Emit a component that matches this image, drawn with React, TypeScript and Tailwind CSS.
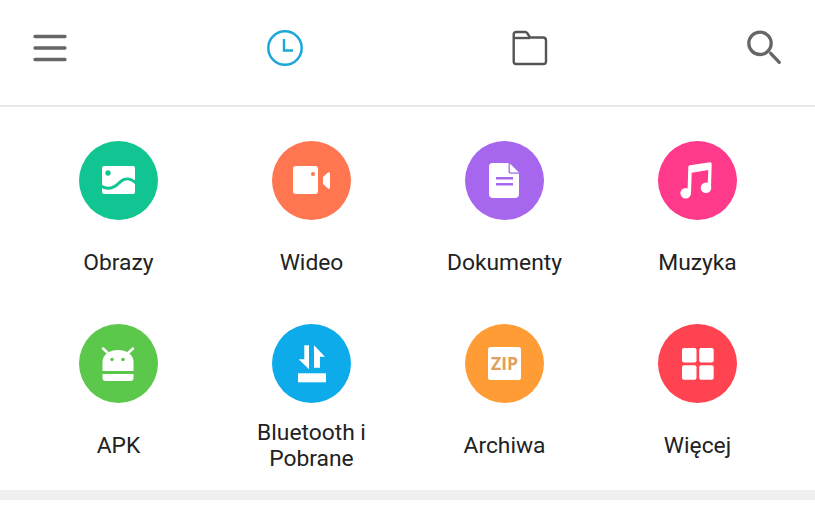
const font = { fontFamily: "Roboto, sans-serif" };

function Circle({ color, children }: { color: string; children: React.ReactNode }) {
  return (
    <div className={`flex h-[79px] w-[79px] items-center justify-center rounded-full ${color}`}>
      {children}
    </div>
  );
}

const Glyph = ({ children }: { children: React.ReactNode }) => (
  <svg viewBox="0 0 79 79" className="h-[79px] w-[79px]">
    {children}
  </svg>
);

const items = [
  {
    label: ["Obrazy"],
    color: "bg-[#10c592]",
    icon: (
      <Glyph>
        <rect x="23" y="25" width="33" height="28" rx="2" fill="#fff" />
        <circle cx="29" cy="32" r="2.700" fill="#10c592" />
        <path d="M22 45 C30 50 36 46 40 42 C45 37 50 36 57 42" fill="none" stroke="#10c592" strokeWidth="3" />
      </Glyph>
    ),
  },
  {
    label: ["Wideo"],
    color: "bg-[#ff7651]",
    icon: (
      <Glyph>
        <rect x="21" y="25" width="25" height="28" rx="3" fill="#fff" />
        <circle cx="41" cy="33" r="2" fill="#ff7651" />
        <path d="M51 36 L56 31.500 Q58 30.500 58 32.500 V46.500 Q58 48.500 56 47.500 L51 43 Z" fill="#fff" />
      </Glyph>
    ),
  },
  {
    label: ["Dokumenty"],
    color: "bg-[#a667ee]",
    icon: (
      <Glyph>
        <path d="M27.500 22 H43.500 V30.500 Q43.500 32.800 45.800 32.800 H54 V53 Q54 57 50 57 H28 Q24 57 24 53 V25.500 Q24 22 27.500 22 Z" fill="#fff" />
        <path d="M44.800 22.500 L54 31.400 H46.300 Q44.800 31.400 44.800 29.900 Z" fill="#fff" />
        <rect x="31" y="36" width="17" height="2.500" fill="#a667ee" />
        <rect x="31" y="42" width="17" height="2.500" fill="#a667ee" />
      </Glyph>
    ),
  },
  {
    label: ["Muzyka"],
    color: "bg-[#ff3a8a]",
    icon: (
      <Glyph>
        <circle cx="27.700" cy="52.300" r="5.300" fill="#fff" />
        <circle cx="48" cy="46.700" r="5.300" fill="#fff" />
        <path d="M30.300 25.700 Q30.500 24.500 32 24.200 L52 21.300 Q53.700 21.200 53.700 23 L53 47 H49.500 L50.300 29 L33.700 31.700 L33 52 H29.500 Z" fill="#fff" />
      </Glyph>
    ),
  },
  {
    label: ["APK"],
    color: "bg-[#5cc84b]",
    icon: (
      <Glyph>
        <path d="M23.500 47 V38 C23.500 30 31 26 39 26 C47 26 54.500 30 54.500 38 V47 Z" fill="#fff" />
        <path d="M24 24.500 L30 30 M54 24.500 L48 30" stroke="#fff" strokeWidth="2.500" strokeLinecap="round" />
        <circle cx="33" cy="35.500" r="1.800" fill="#5cc84b" />
        <circle cx="44" cy="35.500" r="1.800" fill="#5cc84b" />
        <path d="M23.500 50 H54.500 V54 Q54.500 57 51.500 57 H26.500 Q23.500 57 23.500 54 Z" fill="#fff" />
      </Glyph>
    ),
  },
  {
    label: ["Bluetooth i", "Pobrane"],
    color: "bg-[#0eabea]",
    icon: (
      <Glyph>
        <path d="M32.300 21.300 H37 V45.300 L26.700 35.300 H32.300 Z" fill="#fff" />
        <path d="M42 21.300 L53 32.700 H48 V43.700 H42 Z" fill="#fff" />
        <rect x="26" y="49.300" width="28" height="9" fill="#fff" />
      </Glyph>
    ),
  },
  {
    label: ["Archiwa"],
    color: "bg-[#ff9c36]",
    icon: (
      <Glyph>
        <rect x="23" y="23" width="33" height="33" rx="2.500" fill="#fff" />
        <text x="39.500" y="45.500" textAnchor="middle" fontSize="17.500" fontWeight="700" fill="#e09f5c" fontFamily="Open Sans, sans-serif">
          ZIP
        </text>
      </Glyph>
    ),
  },
  {
    label: ["Więcej"],
    color: "bg-[#ff4350]",
    icon: (
      <Glyph>
        <rect x="24" y="24" width="14.500" height="14.500" rx="2" fill="#fff" />
        <rect x="41.200" y="24" width="14.500" height="14.500" rx="2" fill="#fff" />
        <rect x="24" y="41.200" width="14.500" height="14.500" rx="2" fill="#fff" />
        <rect x="41.200" y="41.200" width="14.500" height="14.500" rx="2" fill="#fff" />
      </Glyph>
    ),
  },
];

export default function App() {
  return (
    <div className="flex h-[507px] w-[815px] flex-col overflow-hidden bg-white" style={font}>
      <header className="flex h-[107px] shrink-0 items-center border-b-2 border-[#e9e9e9] pb-[9px] pl-[33px]">
        <svg viewBox="0 0 34 28" className="h-[28px] w-[34px]" fill="none" stroke="#666" strokeWidth="3.300" strokeLinecap="round">
          <path d="M2 2.500 H32 M2 14 H32 M2 25.500 H32" />
        </svg>
        <svg viewBox="0 0 36 36" className="ml-[200px] h-[36px] w-[36px]" fill="none" stroke="#1ba7da">
          <circle cx="18" cy="18" r="16.700" strokeWidth="2.500" />
          <path d="M17 9 V20.500 H26" strokeWidth="2.400" />
        </svg>
        <svg viewBox="0 0 36 36" className="ml-[209px] h-[36px] w-[36px]" fill="none" stroke="#555" strokeWidth="2.400" strokeLinejoin="round">
          <path d="M1.700 4.500 Q1.700 2 4.500 2 H13 Q14.500 2 15.500 3.500 L18 7.500 H31 Q34 7.500 34 10.500 V31.500 Q34 34 31.500 34 H4 Q1.700 34 1.700 31.500 Z" />
          <path d="M1.700 8 H18" />
        </svg>
        <svg viewBox="0 0 36 36" className="ml-[199px] h-[36px] w-[36px]" fill="none" stroke="#666" strokeWidth="3.300" strokeLinecap="round">
          <circle cx="13" cy="13.300" r="11.200" />
          <path d="M23.700 23.300 L32.300 32.300" />
        </svg>
      </header>
      <div className="grid grid-cols-[repeat(4,193px)] gap-y-[35px] pb-[18px] pl-[22px] pt-[34px]">
        {items.map((item) => (
          <div key={item.label[0]} className="flex flex-col items-center">
            <Circle color={item.color}>{item.icon}</Circle>
            <div className="mt-[17px] flex h-[52px] flex-col items-center justify-center text-center text-[22.800px] leading-[26px] text-[#222]">
              {item.label.map((line) => (
                <span key={line}>{line}</span>
              ))}
            </div>
          </div>
        ))}
      </div>
      <div className="h-[10px] shrink-0 bg-[#efefef]" />
    </div>
  );
}
